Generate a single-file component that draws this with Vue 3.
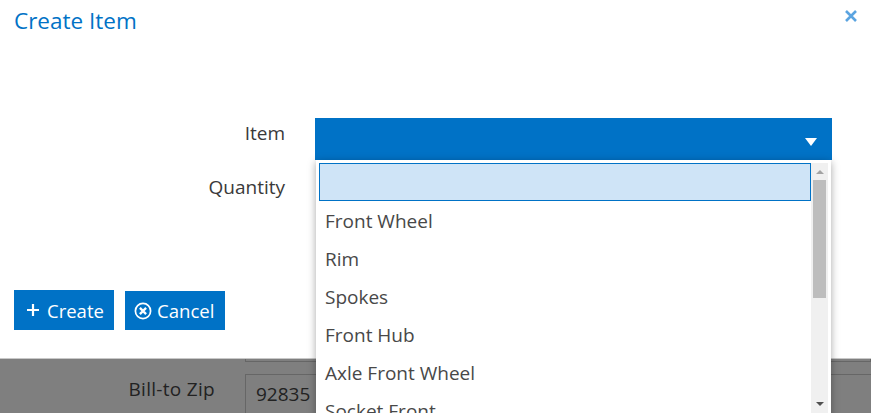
<script setup>
const items = ['Front Wheel', 'Rim', 'Spokes', 'Front Hub', 'Axle Front Wheel', 'Socket Front']
</script>

<template>
    <div class="page">
        <div class="dialog">
            <div class="title-bar">
                <h1 class="title">Create Item</h1>
                <svg class="close" width="14" height="14" viewBox="0 0 14 14">
                    <path d="M2 2 L12 12 M12 2 L2 12" stroke="#5ba4e0" stroke-width="2.6" fill="none" />
                </svg>
            </div>
            <div class="form">
                <div class="row">
                    <label class="label">Item</label>
                    <div class="select">
                        <span class="arrow"></span>
                    </div>
                </div>
                <div class="row quantity">
                    <label class="label">Quantity</label>
                </div>
            </div>
            <div class="buttons">
                <button class="btn create">
                    <svg width="14" height="14" viewBox="0 0 14 14">
                        <path d="M7 1 V13 M1 7 H13" stroke="#fff" stroke-width="2.2" fill="none" />
                    </svg>
                    Create
                </button>
                <button class="btn cancel">
                    <svg width="18" height="18" viewBox="0 0 18 18">
                        <circle cx="9" cy="9" r="7.6" stroke="#fff" stroke-width="1.7" fill="none" />
                        <path d="M5.9 5.9 L12.1 12.1 M12.1 5.9 L5.9 12.1" stroke="#fff" stroke-width="2.3" fill="none" />
                    </svg>
                    Cancel
                </button>
            </div>
        </div>
        <div class="backdrop">
            <div class="back-prev"></div>
            <div class="back-row">
                <span class="back-label">Bill-to Zip</span>
                <div class="back-input">92835</div>
            </div>
        </div>

        <div class="popup">
            <div class="list">
                <div class="search"></div>
                <div v-for="item in items" :key="item" class="option">{{ item }}</div>
            </div>
            <div class="scrollbar">
                <span class="sb-up"></span>
                <div class="sb-thumb"></div>
                <span class="sb-down"></span>
            </div>
        </div>
    </div>
</template>

<style scoped>
.page {
    position: relative;
    width: 871px;
    height: 413px;
    overflow: hidden;
    display: flex;
    flex-direction: column;
    font-family: "Open Sans", "Noto Sans", sans-serif;
    font-size: 19px;
    color: #3a3a3a;
}

.dialog {
    flex: none;
    height: 359px;
    box-sizing: border-box;
    background: #fff;
    display: flex;
    flex-direction: column;
    border-bottom: 1px solid #c8c8c8;
}

.title-bar {
    height: 118px;
    padding: 7px 13px 0 14px;
    display: flex;
    justify-content: space-between;
    align-items: flex-start;
    box-sizing: border-box;
}

.title {
    margin: 0;
    font-size: 22.5px;
    font-weight: 400;
    line-height: 28px;
    color: #0072c6;
}

.close {
    margin-top: 2px;
}

.row {
    display: flex;
    align-items: flex-start;
    height: 42px;
}

.quantity {
    margin-top: 12px;
    height: 36px;
}

.label {
    width: 285px;
    text-align: right;
    margin-right: 30px;
    line-height: 30px;
}

.select {
    width: 517px;
    height: 42px;
    background: #0072c6;
    position: relative;
}

.arrow {
    position: absolute;
    right: 15px;
    top: 20px;
    border-left: 6px solid transparent;
    border-right: 6px solid transparent;
    border-top: 8px solid #fff;
}

.buttons {
    display: flex;
    align-items: flex-end;
    gap: 11px;
    padding: 82px 0 0 14px;
}

.btn {
    height: 39px;
    border: 0;
    background: #0072c6;
    color: #fff;
    font: inherit;
    display: flex;
    align-items: center;
    width: 100px;
    box-sizing: border-box;
}

.create {
    height: 40px;
    padding: 0 0 0 12px;
    gap: 7px;
    font-size: 18.5px;
}

.cancel {
    padding: 0 0 0 9px;
    gap: 5px;
    font-size: 18.6px;
}

.backdrop {
    flex: 1;
    min-height: 0;
    background: #7f7f7f;
    color: #222;
}

.back-prev {
    height: 3px;
    margin-left: 245px;
    border: 1px solid #666;
    border-top: 0;
    box-sizing: border-box;
}

.back-row {
    display: flex;
    margin-top: 12px;
}

.back-label {
    width: 215px;
    text-align: right;
    line-height: 30px;
    letter-spacing: 0.3px;
}

.back-input {
    margin-left: 30px;
    flex: 1;
    height: 44px;
    border: 1px solid #666;
    border-right: 0;
    padding: 6px 10px 0;
    box-sizing: border-box;
}

.popup {
    position: absolute;
    left: 316px;
    top: 160px;
    width: 515px;
    height: 270px;
    background: #fff;
    box-shadow: 0 2px 8px rgba(0, 0, 0, 0.35);
    display: flex;
    padding: 3px 3px 0 3px;
    box-sizing: border-box;
}

.list {
    flex: 1;
    min-width: 0;
    white-space: nowrap;
}

.search {
    height: 38px;
    box-sizing: border-box;
    background: #cfe4f7;
    border: 1px solid #0072c6;
}

.option {
    height: 38px;
    line-height: 40px;
    padding-left: 6px;
    color: #484848;
}

.scrollbar {
    width: 17px;
    height: 250px;
    background: #f0f0f0;
    display: flex;
    flex-direction: column;
    align-items: center;
}

.sb-up {
    margin: 7px 0 6px;
    border-left: 4px solid transparent;
    border-right: 4px solid transparent;
    border-bottom: 4px solid #a3a3a3;
}

.sb-thumb {
    width: 13px;
    height: 118px;
    background: #bdbdbd;
}

.sb-down {
    margin-top: auto;
    margin-bottom: 7px;
    border-left: 4px solid transparent;
    border-right: 4px solid transparent;
    border-top: 4px solid #505050;
}
</style>
